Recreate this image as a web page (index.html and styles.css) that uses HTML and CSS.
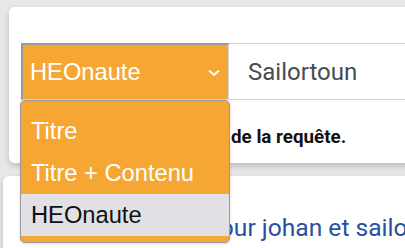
FILE: index.html
```html
<!DOCTYPE html>
<html lang="fr">
<head>
<meta charset="utf-8">
<link rel="stylesheet" href="styles.css">
</head>
<body>
<div class="page">
  <section class="card card-search">
    <div class="input-group">
      <div class="select">
        <span class="select-value">HEOnaute</span>
        <svg class="chevron" width="12" height="8" viewBox="0 0 12 8"><path d="M1 1.5 L6 6 L11 1.5" fill="none" stroke="#fff" stroke-width="2"/></svg>
      </div>
      <div class="input">Sailortoun</div>
    </div>
    <p class="notice">de la requête.</p>
  </section>
  <section class="card card-results">
    <p class="results-title">pour johan et sailortoun</p>
  </section>
  <ul class="dropdown">
    <li class="option">Titre</li>
    <li class="option">Titre + Contenu</li>
    <li class="option option-active">HEOnaute</li>
  </ul>
</div>
</body>
</html>
```

FILE: styles.css
```css
* { box-sizing: border-box; }
html, body { margin: 0; padding: 0; }
body {
  background: #e7e7e7;
  width: 405px;
  height: 248px;
  overflow: hidden;
  font-family: Roboto, "Liberation Sans", sans-serif;
}
.page {
  position: relative;
  padding-top: 7px;
}
.card {
  background: #fff;
  border-radius: 6px;
  box-shadow: 0 3px 6px rgba(0,0,0,0.18);
}
.card-search {
  margin-left: 9px;
  width: 430px;
  height: 156px;
  padding: 36px 0 0 12px;
}
.input-group {
  display: flex;
  height: 57px;
}
.select {
  width: 208px;
  background: #f6a733;
  border-top: 2px solid #999;
  border-left: 2px solid #999;
  border-bottom: 1px solid #d6d6d6;
  border-right: 1px solid #d6d6d6;
  display: flex;
  align-items: center;
  justify-content: space-between;
  padding: 0 8px 0 7px;
}
.select-value {
  color: #fff;
  font-family: "Liberation Sans", Arial, sans-serif;
  font-size: 23.7px;
}
.chevron { display: block; margin-top: 1px; }
.input {
  flex: 1;
  border-top: 1px solid #d4d4d8;
  border-bottom: 1px solid #d4d4d8;
  display: flex;
  align-items: center;
  padding-left: 19px;
  color: #454c55;
  font-size: 24px;
}
.notice {
  margin: 0;
  padding: 25px 0 0 210px;
  font-weight: 700;
  font-size: 18.8px;
  color: #111;
  line-height: 24px;
}
.card-results {
  margin: 13px 0 0 3px;
  width: 440px;
  height: 120px;
  padding: 38px 0 0 203px;
}
.results-title {
  margin: 0;
  color: #2a4f9e;
  font-size: 24.6px;
  line-height: 28px;
  white-space: nowrap;
}
.dropdown {
  position: absolute;
  left: 20px;
  top: 100px;
  width: 210px;
  height: 143px;
  margin: 0;
  padding: 9px 0 6px;
  list-style: none;
  background: #f6a733;
  border: 1px solid #9a9a9a;
  border-radius: 5px;
  box-shadow: 0 1px 3px rgba(0,0,0,0.15);
  overflow: hidden;
}
.option {
  height: 42px;
  display: flex;
  align-items: center;
  padding-left: 10px;
  color: #fff;
  font-family: "Liberation Sans", Arial, sans-serif;
  font-size: 23.7px;
}
.option-active {
  background: #e1e0e5;
  color: #111;
}
```
